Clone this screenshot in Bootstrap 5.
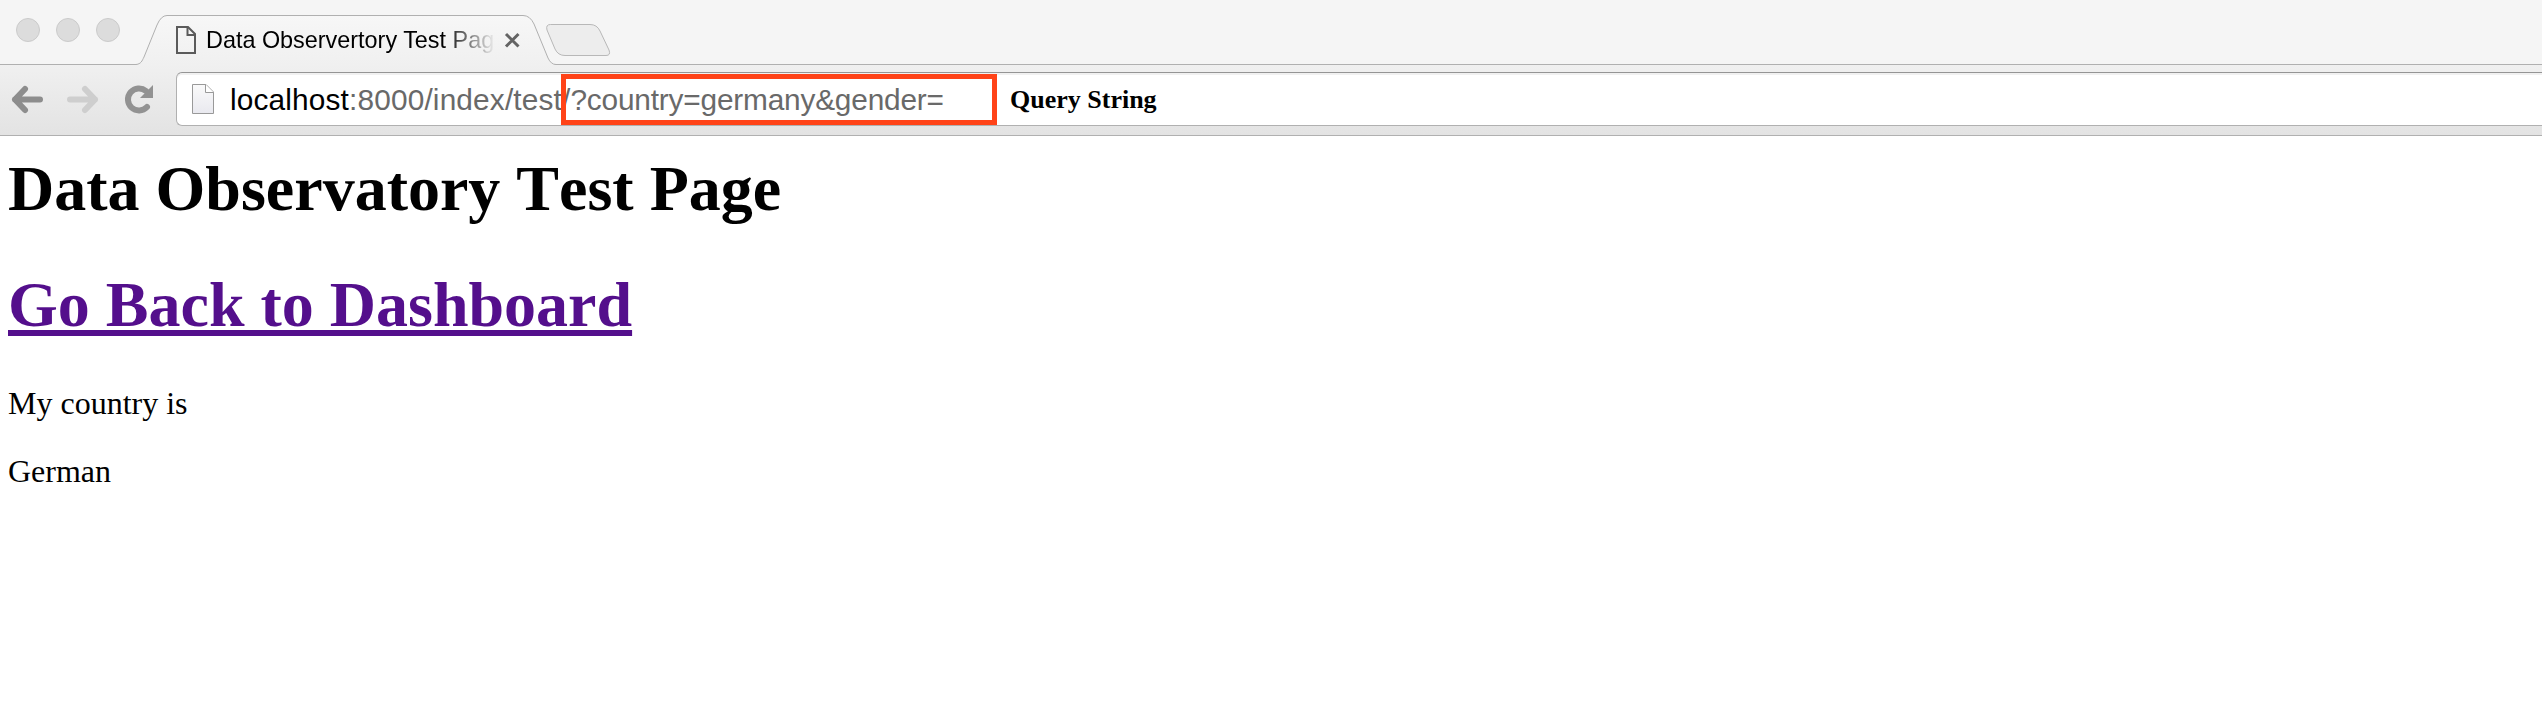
<!DOCTYPE html>
<html lang="en">
<head>
<meta charset="utf-8">
<title>Data Observertory Test Page</title>
<link href="https://cdn.jsdelivr.net/npm/bootstrap@5.3.0/dist/css/bootstrap.min.css" rel="stylesheet">
<style>
body{background:#fff;color:#000;font-family:"Liberation Sans",Arial,sans-serif;overflow:hidden}
.tabstrip{height:65px;background:#f5f5f5;box-shadow:inset 0 -1px #b0b0b0}
.lights{padding:18px 0 0 16px;gap:16px;width:132px}
.light{width:24px;height:24px;border-radius:50%;background:#dcdcdc;border:1px solid #cbcbcb}
.tab{width:424px;height:65px}
.tab-shape{left:0;top:0}
.tab-body{padding:26px 0 0 44px}
.tab-title{margin:1px 0 0 10px;width:289px;height:30px;font-size:23.4px;line-height:27px;-webkit-mask-image:linear-gradient(90deg,#000 236px,transparent 290px);mask-image:linear-gradient(90deg,#000 236px,transparent 290px)}
.newtab{margin-left:-11px}
.toolbar{height:71px;background:linear-gradient(#f0f0f0,#e3e3e3);border-bottom:1px solid #b0b0b0;padding-top:7px}
.navs{width:176px}
.omnibox{height:54px;background:#fff;border:1px solid #b0b0b0;border-top-color:#959595;border-right:0;border-radius:6px 0 0 6px;box-shadow:inset 0 2px #f1f1f1}
.page-icon{margin-left:15px}
.url{font-size:29.8px;line-height:34px;margin:2px 0 0 16px;color:#696969;letter-spacing:.16px}
.url b{font-weight:400;color:#000}
.query{letter-spacing:-.18px}
.marker{left:384px;top:1px;width:436px;height:51px;border:5px solid #ff4318}
.note{left:833px;top:12px;font:bold 26px/30px "Liberation Serif",serif}
.page{padding:16px 8px;font-family:"Liberation Serif","Times New Roman",serif;font-size:32px;line-height:37px}
.page h1{font-size:64px;line-height:74px;font-weight:700;margin-bottom:42px;font-kerning:none}
.page h1 + p{margin-top:43px}
.page a{color:#540f8c;text-decoration-thickness:6px;text-underline-offset:4px;text-decoration-skip-ink:none}
.page p{margin-bottom:31px}
</style>
</head>
<body>
<header>
  <div class="tabstrip d-flex">
    <div class="lights d-flex flex-shrink-0"><span class="light"></span><span class="light"></span><span class="light"></span></div>
    <div class="tab position-relative flex-shrink-0">
      <svg class="tab-shape position-absolute" width="428" height="65">
        <defs><linearGradient id="tg" x1="0" y1="0" x2="0" y2="1"><stop offset="0" stop-color="#f7f7f7"/><stop offset="1" stop-color="#f0f0f0"/></linearGradient></defs>
        <path d="M4 65V64.5C9 64 10 61 12 57L25 25Q29 15.5 35 15.5H391Q398 15.500 402 24L416 58Q419 64.500 424 64.500V65Z" fill="url(#tg)"/>
        <path d="M0 64.500H4C9 64 10 61 12 57L25 25Q29 15.500 35 15.500H391Q398 15.500 402 24L416 58Q419 64.500 424 64.500H428" fill="none" stroke="#b0b0b0"/>
      </svg>
      <div class="tab-body d-flex position-relative">
        <svg class="flex-shrink-0" width="20" height="28" fill="none" stroke="#5b5b5b" stroke-width="2"><path d="M1 1H12L19 8V27H1Z"/><path d="M11.500 1V9H19"/></svg>
        <span class="tab-title text-nowrap overflow-hidden">Data Observertory Test Page</span>
        <svg class="ms-2 flex-shrink-0" width="20" height="28" stroke="#646464" stroke-width="3"><path d="M3 8L15.500 20.500M15.500 8L3 20.500"/></svg>
      </div>
    </div>
    <svg class="newtab position-relative flex-shrink-0" width="68" height="60"><path d="M5.500 24.500H45Q52 24.500 55 31L64 50Q66 55.500 61 55.500H20Q13 55.500 10 49L2 30Q.500 24.500 5.500 24.500Z" fill="#ededed" stroke="#b8b8b8"/></svg>
  </div>
  <div class="toolbar d-flex">
    <svg class="navs flex-shrink-0" height="60" fill="none" stroke-width="6" stroke-linecap="round" stroke-linejoin="round">
      <path d="M15 27.500H40M25 17L15 27.500L25 38" stroke="#8d8d8d"/>
      <path d="M70 27.500H95M85 17L95 27.500L85 38" stroke="#cecece"/>
      <path d="M147 35A11 11 0 1 1 146 19" stroke="#929292"/>
      <path d="M153 13V26H140Z" fill="#929292"/>
    </svg>
    <div class="omnibox position-relative flex-grow-1 d-flex align-items-center">
      <svg class="page-icon flex-shrink-0" width="22" height="31"><defs><linearGradient id="pg" x1="0" y1="0" x2="0" y2="1"><stop stop-color="#fafafa"/><stop offset="1" stop-color="#e9e9ef"/></linearGradient></defs><path d="M.5.500H14L21.500 8V29.500H.5Z" fill="url(#pg)" stroke="#999"/><path d="M13.500.500V8.500H21.500" fill="#fff" stroke="#999"/></svg>
      <span class="url text-nowrap"><b>localhost</b>:8000/index/test/<span class="query">?country=germany&amp;gender=</span></span>
      <span class="marker position-absolute"></span>
      <span class="note position-absolute text-nowrap">Query String</span>
    </div>
  </div>
</header>
<main class="page">
  <h1>Data Observatory Test Page</h1>
  <h1><a href="#">Go Back to Dashboard</a></h1>
  <p>My country is</p>
  <p>German</p>
</main>
<script src="https://cdn.jsdelivr.net/npm/bootstrap@5.3.0/dist/js/bootstrap.bundle.min.js"></script>
</body>
</html>
